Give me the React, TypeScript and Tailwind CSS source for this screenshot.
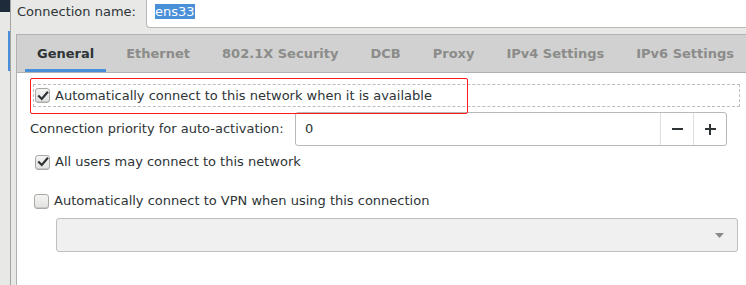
import React from 'react'

const tabs = ['General', 'Ethernet', '802.1X Security', 'DCB', 'Proxy', 'IPv4 Settings', 'IPv6 Settings']

function Check({ checked }: { checked?: boolean }) {
  return (
    <span className="flex h-[15px] w-[15px] shrink-0 items-center justify-center rounded-[3px] border border-[#a9aaa6] bg-gradient-to-b from-[#f4f4f3] to-[#e2e2e0] shadow-[inset_0_-1px_0_#c9c9c7]">
      {checked ? (
        <svg width="12" height="12" viewBox="0 0 12 12">
          <path d="M2 6.2 L4.8 9 L10.2 2.6" fill="none" stroke="#2e3436" strokeWidth="2.2" strokeLinecap="square" />
        </svg>
      ) : null}
    </span>
  )
}

export default function App() {
  return (
    <div className="relative flex h-[285px] w-[746px] overflow-hidden bg-[#e8e8e7] text-[13px] text-[#2e3436]" style={{ fontFamily: '"DejaVu Sans", sans-serif' }}>
      {/* desktop strip behind the dialog */}
      <div className="flex w-[10px] shrink-0 flex-col">
        <div className="h-[12px] bg-[#1e2b3b]" />
        <div className="ml-auto mt-[19px] h-[40px] w-[2px] bg-[#4a90d9]" />
      </div>
      <div className="flex min-w-0 flex-1 flex-col border-l border-[#a4a4a2] bg-[#e8e8e7]">
        {/* connection name */}
        <div className="flex h-[34px] shrink-0 items-start">
          <div className="w-[135px] shrink-0 pl-[6px] pt-[4px] leading-[16px]">Connection name:</div>
          <div className="flex h-[28px] flex-1 items-start rounded-bl-[4px] border-b border-l border-[#b8b8b5] bg-white pl-[8px] pt-[4px]">
            <span className="bg-[#4a90d9] leading-[15px] text-white">ens33</span>
          </div>
        </div>

        {/* notebook */}
        <div className="ml-[5px] flex flex-1 flex-col border-l border-t border-[#b1b1af] bg-white">
          <div className="flex h-[38px] shrink-0 items-stretch gap-2 border-b border-[#b1b1af] bg-[#d1d1d1] pl-[8px]">
            {tabs.map((t, i) => (
              <div
                key={t}
                className={[
                  'flex items-center px-3 font-bold',
                  i === 0 ? 'border-b-[3px] border-[#4a90d9] pt-[3px] text-[#2e3436]' : 'text-[#8b8c89]',
                ].join(' ')}
              >
                {t}
              </div>
            ))}
          </div>

          <div className="flex flex-col pl-[13px] pt-[11px]">
            <div className="ml-[3px] flex h-[23px] w-[707px] items-center gap-[5px] border border-dashed border-[#bdbdbd] pl-[1px]">
              <Check checked />
              <span>Automatically connect to this network when it is available</span>
            </div>

            <div className="mt-[5px] flex h-[34px] items-center">
              <div className="w-[265px] shrink-0">Connection priority for auto-activation:</div>
              <div className="flex h-[34px] w-[432px] items-stretch rounded-[3px] border border-[#b8b8b5] bg-white">
                <div className="flex flex-1 items-center pl-[9px]">0</div>
                <div className="flex w-[33px] items-center justify-center border-l border-[#dedede]">
                  <span className="block h-[2px] w-[11px] bg-[#2e3436]" />
                </div>
                <div className="flex w-[33px] items-center justify-center border-l border-[#dedede]">
                  <span className="relative block h-[11px] w-[11px]">
                    <span className="absolute left-0 top-[4.5px] h-[2px] w-[11px] bg-[#2e3436]" />
                    <span className="absolute left-[4.5px] top-0 h-[11px] w-[2px] bg-[#2e3436]" />
                  </span>
                </div>
              </div>
            </div>

            <div className="ml-[5px] mt-[5px] flex h-[22px] items-center gap-[5px]">
              <Check checked />
              <span>All users may connect to this network</span>
            </div>

            <div className="ml-[4px] mt-[17px] flex h-[22px] items-center gap-[5px]">
              <Check />
              <span>Automatically connect to VPN when using this connection</span>
            </div>

            <div className="ml-[26px] mt-[6px] flex h-[34px] w-[682px] items-center justify-end rounded-[3px] border border-[#bfbfbd] bg-[#f0f0f0] pr-[13px]">
              <svg width="9" height="5" viewBox="0 0 9 5">
                <path d="M0 0 H9 L4.5 5 Z" fill="#8a8a8a" />
              </svg>
            </div>
          </div>
        </div>
      </div>

      {/* red annotation box */}
      <div className="pointer-events-none absolute left-[30px] top-[78px] h-[36px] w-[438px] rounded-[2px] border-[1.5px] border-[#ff1a1a]" />
    </div>
  )
}
